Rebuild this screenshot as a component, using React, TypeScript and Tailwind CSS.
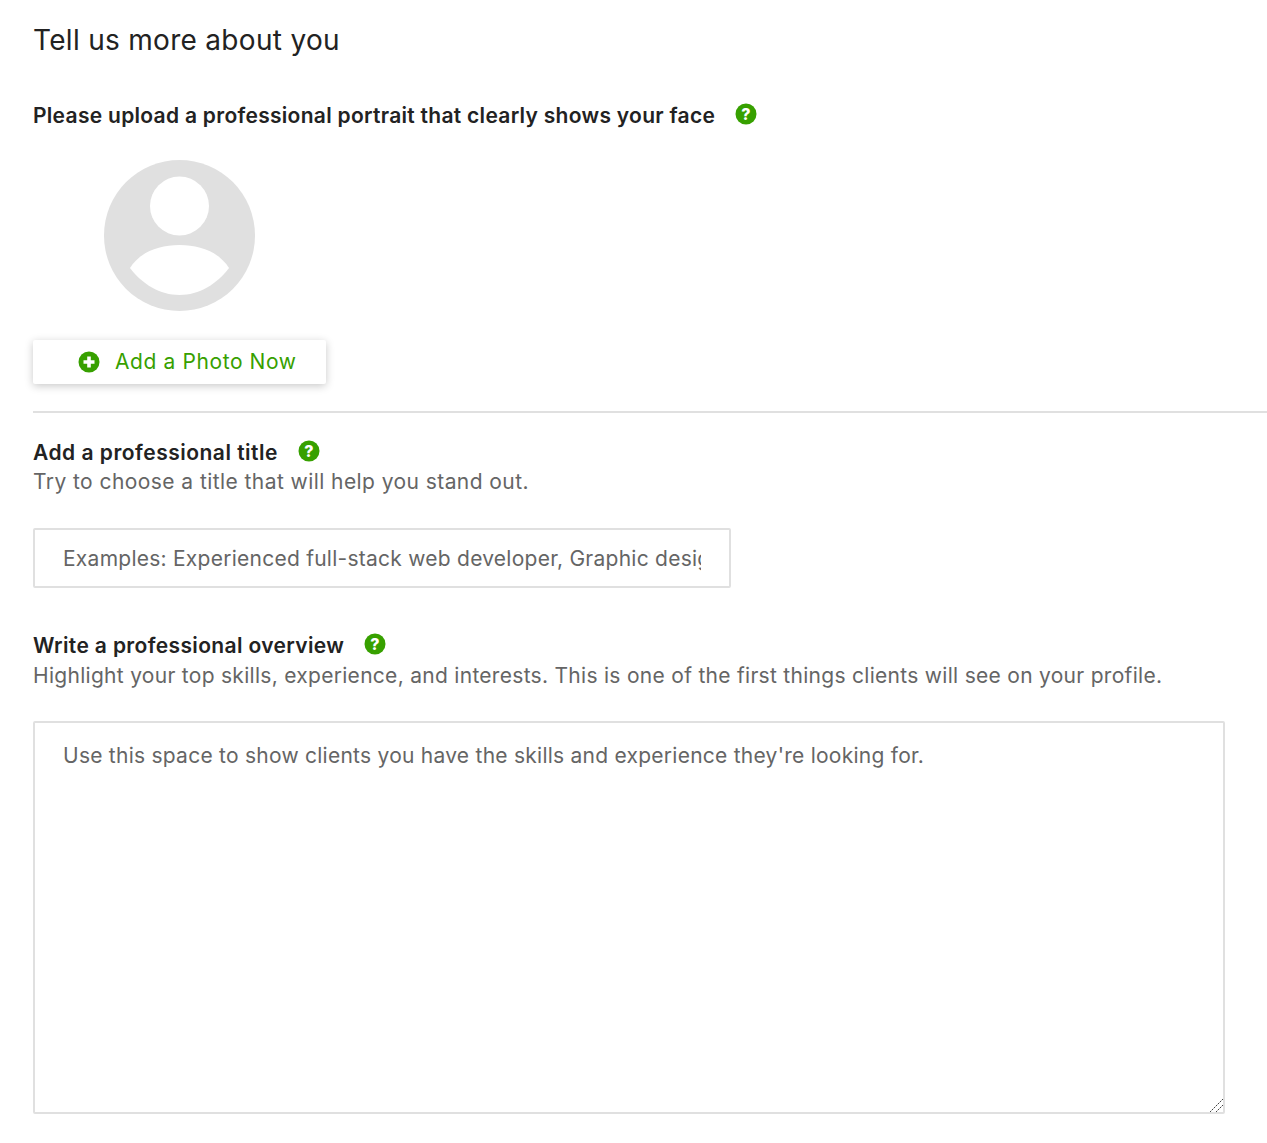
function HelpIcon() {
  return (
    <svg width="22" height="22" viewBox="0 0 22 22" className="-mt-[4px] shrink-0">
      <circle cx="11" cy="11" r="10.5" fill="#37a000" />
      <text x="11" y="16.5" textAnchor="middle" fontSize="16" fontWeight="800" fill="#fff" fontFamily="Inter, sans-serif">?</text>
    </svg>
  );
}

function PlusIcon() {
  return (
    <svg width="22" height="22" viewBox="0 0 22 22" className="shrink-0">
      <circle cx="11" cy="11" r="10.5" fill="#37a000" />
      <path d="M11 5.5v11M5.5 11h11" stroke="#fff" strokeWidth="3.6" />
    </svg>
  );
}

function Avatar() {
  return (
    <svg width="151" height="151" viewBox="0 0 151 151">
      <circle cx="75.5" cy="75.5" r="75.5" fill="#e0e0e0" />
      <circle cx="75.5" cy="46" r="29.5" fill="#fff" />
      <path d="M26 108 C36 92 55 85 75.5 85 C96 85 115 92 125 108 C113 124 95 135 75.5 135 C56 135 38 124 26 108 Z" fill="#fff" />
    </svg>
  );
}

const GRIP_LONG = [0, 1, 2, 3, 4, 5, 6, 7, 8, 9, 10, 11, 12];
const GRIP_SHORT = [0, 1, 2, 3, 4, 5, 6];

function ResizeGrip() {
  return (
    <svg width="16" height="16" viewBox="0 0 16 16" shapeRendering="crispEdges" className="absolute right-px bottom-px">
      {GRIP_LONG.map((i) => (
        <rect key={i} x={14 - i} y={2 + i} width="1" height="1" fill={i % 2 === 0 ? '#444' : '#bbb'} />
      ))}
      {GRIP_SHORT.map((i) => (
        <rect key={i} x={14 - i} y={8 + i} width="1" height="1" fill={i % 2 === 0 ? '#444' : '#bbb'} />
      ))}
    </svg>
  );
}

export default function App() {
  return (
    <div className="min-h-[1143px] overflow-hidden bg-white pl-[33px] font-['Inter',sans-serif] text-[21px] tracking-[0.29px] text-[#656565]">
      <h1 className="pt-[22px] text-[28px] leading-[36px] font-normal tracking-[0.3px] text-[#222]">Tell us more about you</h1>

      <div className="mt-[43px] flex items-center gap-[20px]">
        <h2 className="text-[21px] leading-[30px] font-semibold text-[#222]">Please upload a professional portrait that clearly shows your face</h2>
        <HelpIcon />
      </div>

      <div className="mt-[29px] ml-[71px]">
        <Avatar />
      </div>

      <button className="mt-[29px] flex h-[44px] w-[293px] items-center gap-[15px] rounded-[2px] bg-white pl-[45px] tracking-[0.6px] text-[#37a000] shadow-[0_2px_8px_rgba(0,0,0,0.22)]">
        <PlusIcon />
        <span>Add a Photo Now</span>
      </button>

      <div className="mt-[27px] border-t-2 border-[#e0e0e0]" />

      <div className="mt-[25px] flex items-center gap-[20px]">
        <h2 className="text-[21px] leading-[30px] font-semibold tracking-[0.5px] text-[#222]">Add a professional title</h2>
        <HelpIcon />
      </div>
      <p className="-mt-px leading-[30px] tracking-[0.43px]">Try to choose a title that will help you stand out.</p>
      <input
        className="mt-[31px] block h-[60px] w-[698px] rounded-[2px] border-2 border-[#e0e0e0] px-[28px] tracking-[0.25px] outline-none placeholder:text-[#656565]"
        placeholder="Examples: Experienced full-stack web developer, Graphic designer, Marketing manager"
      />

      <div className="mt-[43px] flex items-center gap-[20px]">
        <h2 className="text-[21px] leading-[30px] font-semibold tracking-[0.36px] text-[#222]">Write a professional overview</h2>
        <HelpIcon />
      </div>
      <p className="leading-[30px]">Highlight your top skills, experience, and interests. This is one of the first things clients will see on your profile.</p>
      <div className="relative mt-[30px] w-[1192px]">
        <textarea
          className="block h-[393px] w-full resize-none rounded-[2px] border-2 border-[#e0e0e0] px-[28px] py-[18px] leading-[30px] tracking-[0.25px] outline-none placeholder:text-[#656565]"
          placeholder="Use this space to show clients you have the skills and experience they're looking for."
        />
        <ResizeGrip />
      </div>
    </div>
  );
}
